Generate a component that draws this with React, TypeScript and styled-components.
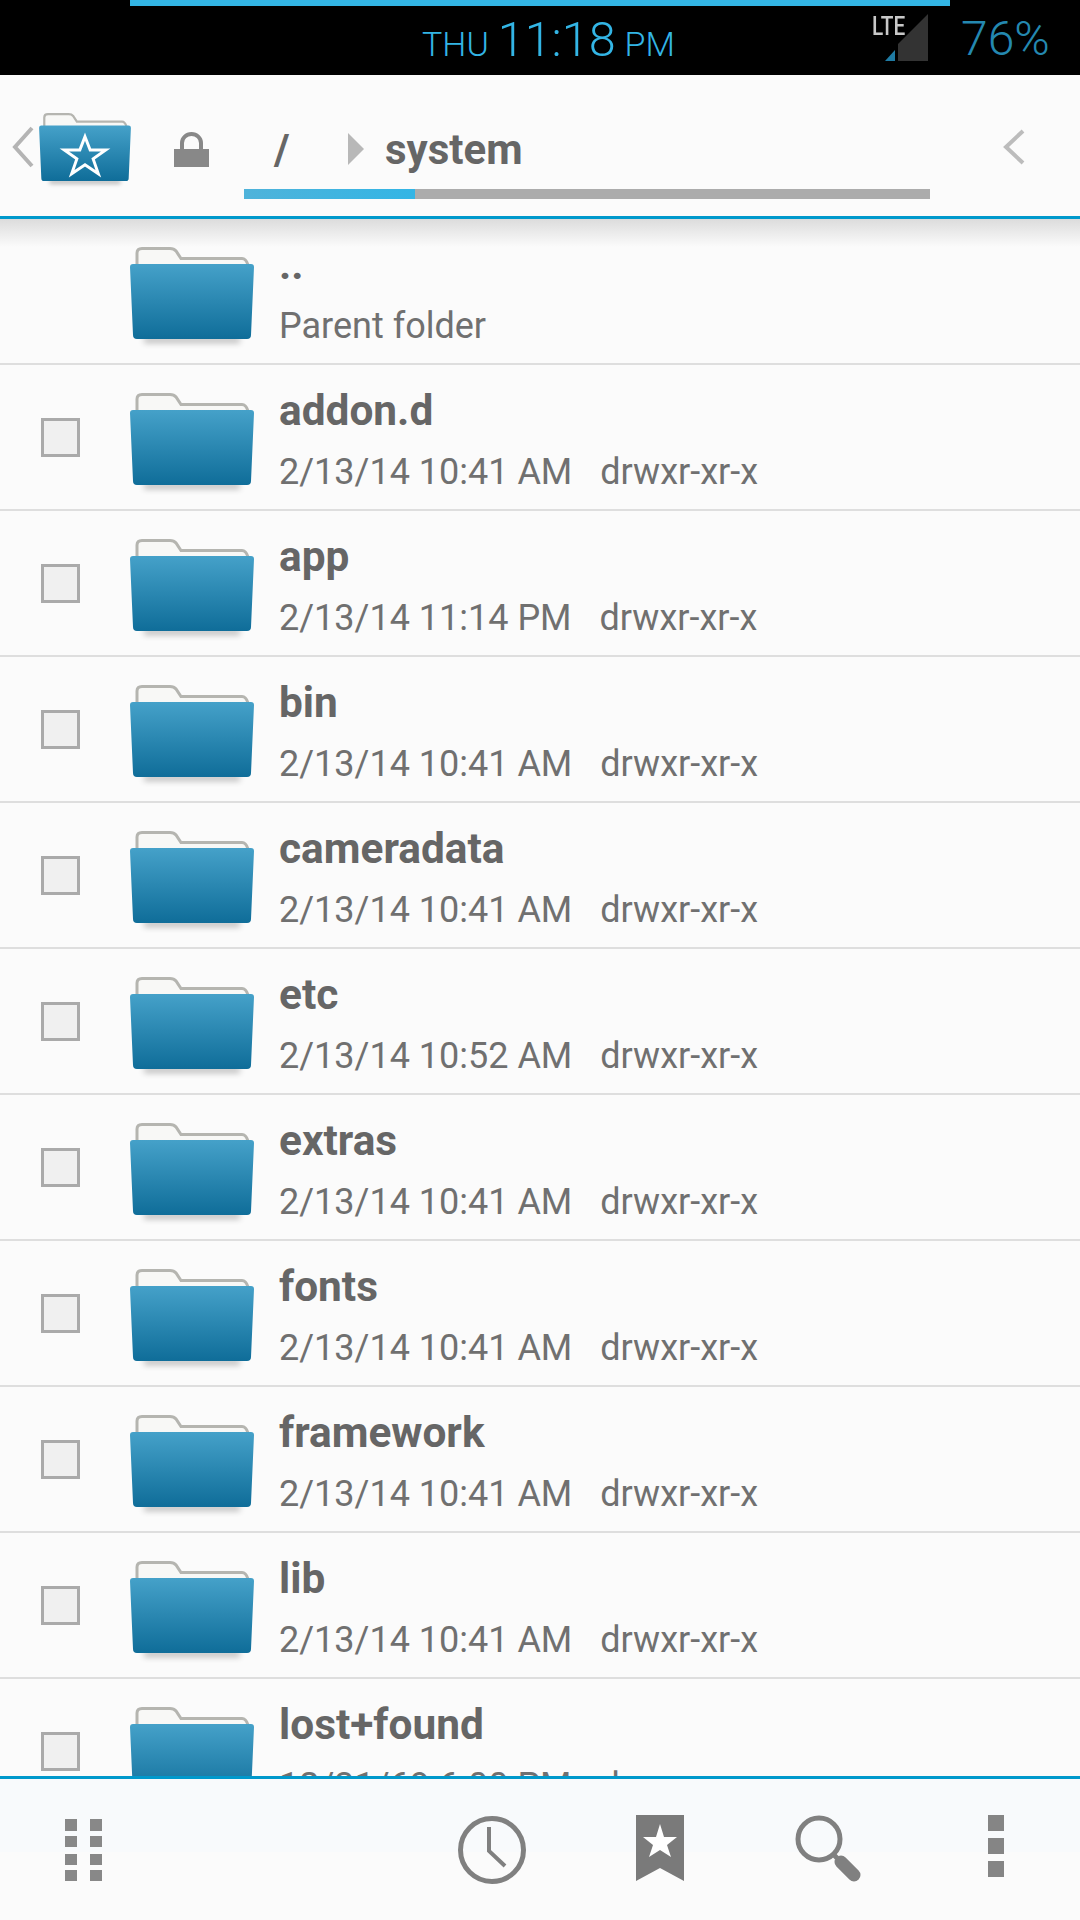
import React from "react";
import styled, { createGlobalStyle } from "styled-components";

const rows = [
  { name: "addon.d", date: "2/13/14 10:41 AM" },
  { name: "app", date: "2/13/14 11:14 PM" },
  { name: "bin", date: "2/13/14 10:41 AM" },
  { name: "cameradata", date: "2/13/14 10:41 AM" },
  { name: "etc", date: "2/13/14 10:52 AM" },
  { name: "extras", date: "2/13/14 10:41 AM" },
  { name: "fonts", date: "2/13/14 10:41 AM" },
  { name: "framework", date: "2/13/14 10:41 AM" },
  { name: "lib", date: "2/13/14 10:41 AM" },
  { name: "lost+found", date: "12/31/69 6:00 PM" },
];

// folder artwork, shared by the list rows and the favourites button
const FolderIcon: React.FC<{ id: string; star?: boolean; width: number; height: number }> = ({ id, star, width, height }) => (
  <svg width={width} height={height} viewBox="0 0 124 104">
    <defs>
      <linearGradient id={id} x1="0" y1="0" x2="0" y2="1">
        <stop offset="0" stopColor="#45a1c9" />
        <stop offset="1" stopColor="#0f6d99" />
      </linearGradient>
      <filter id={`${id}-b`} x="-10%" y="-100%" width="120%" height="300%">
        <feGaussianBlur stdDeviation="3" />
      </filter>
    </defs>
    <rect x="14" y="90" width="96" height="6" fill="#000" opacity="0.25" filter={`url(#${id}-b)`} />
    <path d="M7 20 V6 Q7 1.5 12 1.5 H40 Q44 1.5 46 4 L51 11.5 H112 Q116 11.5 118 18 V20 Z" fill="#f8f8f6" stroke="#b5b5b0" strokeWidth="3" />
    <path d="M0 20 Q0 17 3 17 H121 Q124 17 124 20 L121 88 Q121 92 117 92 H7 Q3 92 3 88 Z" fill={`url(#${id})`} />
    {star && (
      <path d="M62 32 L69 50 L90 50 L73 62 L80 82 L62 70 L44 82 L51 62 L34 50 L55 50 Z" fill="none" stroke="#fff" strokeWidth="4" />
    )}
  </svg>
);

const App: React.FC = () => {
  return (
    <Screen>
      <GlobalStyle />
      <StatusBar>
        <LoadBar />
        <Clock>
          <ClockSmall>THU</ClockSmall>
          <ClockBig>11:18</ClockBig>
          <ClockSmall>PM</ClockSmall>
        </Clock>
        <Signal>
          <LteLabel>LTE</LteLabel>
          <svg width="43" height="47" viewBox="0 0 43 47">
            <path d="M43 0 V47 H13 V30 Z" fill="#333" />
            <path d="M0 47 L10 36 V47 Z" fill="#1f7ba3" />
          </svg>
        </Signal>
        <Battery>76%</Battery>
      </StatusBar>

      <Header>
        <FavButton>
          <svg width="22" height="42" viewBox="0 0 22 42">
            <path d="M20 2 L3 21 L20 40" fill="none" stroke="#b4b4b4" strokeWidth="4" />
          </svg>
          <FavFolder>
            <FolderIcon id="fav" star width={92} height={77} />
          </FavFolder>
        </FavButton>
        <LockIcon width="35" height="35" viewBox="0 0 35 35">
          <path d="M8 18 V11 A9.5 9 0 0 1 27 11 V18" fill="none" stroke="#888" strokeWidth="4" />
          <rect x="0" y="17" width="35" height="18" fill="#888" />
        </LockIcon>
        <Breadcrumb>
          <Crumbs>
            <RootCrumb>/</RootCrumb>
            <svg width="16" height="32" viewBox="0 0 16 32">
              <path d="M0 0 L16 16 L0 32 Z" fill="#b8b8b8" />
            </svg>
            <CrumbName>system</CrumbName>
          </Crumbs>
          <Track>
            <TrackFill />
          </Track>
        </Breadcrumb>
        <NextChevron width="24" height="36" viewBox="0 0 24 36">
          <path d="M21 2 L4 18 L21 34" fill="none" stroke="#bcbcbc" strokeWidth="4" />
        </NextChevron>
      </Header>

      <ListArea>
        <HeaderShadow />
        <Row>
          <CheckSlot />
          <FolderSlot>
            <FolderIcon id="parent" width={124} height={104} />
          </FolderSlot>
          <RowText>
            <RowName>..</RowName>
            <RowMeta>
              <span>Parent folder</span>
            </RowMeta>
          </RowText>
        </Row>
        {rows.map((row) => (
          <Row key={row.name}>
            <CheckSlot>
              <CheckBox />
            </CheckSlot>
            <FolderSlot>
              <FolderIcon id={`f-${row.name}`} width={124} height={104} />
            </FolderSlot>
            <RowText>
              <RowName>{row.name}</RowName>
              <RowMeta>
                <span>{row.date}</span>
                <span>{row.name === "lost+found" ? "drwx------" : "drwxr-xr-x"}</span>
              </RowMeta>
            </RowText>
          </Row>
        ))}
      </ListArea>

      <Footer>
        <FooterCell>
          <svg width="38" height="62" viewBox="0 0 38 62">
            <g fill="#888">
              <rect x="0" y="0" width="12" height="12" />
              <rect x="25" y="0" width="12" height="12" />
              <rect x="0" y="17" width="12" height="11" />
              <rect x="25" y="17" width="12" height="11" />
              <rect x="0" y="35" width="12" height="11" />
              <rect x="25" y="35" width="12" height="11" />
              <rect x="0" y="51" width="12" height="11" />
              <rect x="25" y="51" width="12" height="11" />
            </g>
          </svg>
        </FooterCell>
        <FooterActions>
          <FooterCell>
            <svg width="70" height="70" viewBox="0 0 70 70">
              <circle cx="35" cy="35" r="31.5" fill="none" stroke="#808080" strokeWidth="5" />
              <path d="M32 12 V36 L48 51" fill="none" stroke="#808080" strokeWidth="4" />
            </svg>
          </FooterCell>
          <FooterCell>
            <svg width="48" height="66" viewBox="0 0 48 66">
              <path d="M0 0 H48 V66 L24 53 L0 66 Z" fill="#7a7a7a" />
              <path d="M24 9 L28 22 L41 22 L31 30 L35 42 L24 35 L13 42 L17 30 L7 22 L20 22 Z" fill="#fff" />
            </svg>
          </FooterCell>
          <FooterCell>
            <svg width="66" height="68" viewBox="0 0 66 68">
              <circle cx="24" cy="24" r="21" fill="none" stroke="#808080" strokeWidth="5" />
              <path d="M38 39 L42 43" stroke="#808080" strokeWidth="5" />
              <path d="M46 47 L59 60" stroke="#808080" strokeWidth="13" strokeLinecap="round" />
            </svg>
          </FooterCell>
          <FooterCell>
            <svg width="16" height="62" viewBox="0 0 16 62">
              <g fill="#858585">
                <rect x="0" y="0" width="16" height="16" />
                <rect x="0" y="23" width="16" height="16" />
                <rect x="0" y="46" width="16" height="16" />
              </g>
            </svg>
          </FooterCell>
        </FooterActions>
      </Footer>
    </Screen>
  );
};

export default App;

const GlobalStyle = createGlobalStyle`
  html, body {
    margin: 0;
    padding: 0;
    background: #fbfbfb;
    font-family: Roboto, "Liberation Sans", sans-serif;
  }
`;

const Screen = styled.div`
  width: 1080px;
  height: 1920px;
  display: flex;
  flex-direction: column;
  overflow: hidden;
  background: #fbfbfb;
`;

const StatusBar = styled.div`
  position: relative;
  flex: 0 0 75px;
  display: flex;
  align-items: center;
  background: #000;
`;

const LoadBar = styled.div`
  position: absolute;
  top: 0;
  left: 130px;
  width: 820px;
  height: 6px;
  background: #33b5e5;
`;

const Clock = styled.div`
  display: flex;
  flex: 0 0 253px;
  align-items: baseline;
  gap: 9px;
  margin: 4px 0 0 422px;
  color: #33b5e5;
  font-weight: 300;
  white-space: nowrap;
`;

const ClockSmall = styled.span`
  font-size: 34px;
`;

const ClockBig = styled.span`
  font-size: 48.5px;
`;

const Signal = styled.div`
  position: relative;
  display: flex;
  margin: 0 0 0 210px;
`;

const LteLabel = styled.span`
  position: absolute;
  top: -3px;
  left: -13px;
  color: #c8c8c8;
  font-size: 26px;
  font-weight: 500;
  transform: scaleX(0.8);
  transform-origin: left center;
`;

const Battery = styled.span`
  margin: 2px 0 0 33px;
  color: #2488b0;
  font-size: 48px;
  font-weight: 300;
`;

const Header = styled.div`
  position: relative;
  flex: 0 0 141px;
  display: flex;
  align-items: flex-start;
  box-sizing: content-box;
  border-bottom: 3px solid #0099cc;
`;

const FavButton = styled.div`
  position: relative;
  display: flex;
  margin: 51px 0 0 12px;
`;

const FavFolder = styled.div`
  position: absolute;
  top: -13px;
  left: 27px;
`;

const LockIcon = styled.svg`
  margin: 57px 0 0 140px;
`;

const Breadcrumb = styled.div`
  width: 686px;
  margin: 0 0 0 35px;
`;

const Crumbs = styled.div`
  height: 114px;
  display: flex;
  align-items: center;
  padding-top: 34px;
  box-sizing: border-box;
  color: #666;
  font-weight: 700;
  font-size: 42px;
`;

const RootCrumb = styled.span`
  width: 104px;
  padding-left: 30px;
  box-sizing: border-box;
`;

const CrumbName = styled.span`
  margin-left: 21px;
`;

const Track = styled.div`
  height: 10px;
  background: #acacac;
`;

const TrackFill = styled.div`
  width: 171px;
  height: 100%;
  background: linear-gradient(90deg, #4fb3da, #33b5e5);
`;

const NextChevron = styled.svg`
  margin: 54px 0 0 72px;
`;

const ListArea = styled.div`
  position: relative;
  flex: 1;
  min-height: 0;
  overflow: hidden;
`;

const HeaderShadow = styled.div`
  position: absolute;
  top: 0;
  left: 0;
  right: 0;
  height: 28px;
  background: linear-gradient(#dcdcdc, rgba(251, 251, 251, 0));
`;

const Row = styled.div`
  height: 146px;
  display: flex;
  box-sizing: border-box;
  border-bottom: 2px solid #dedede;

  &:first-of-type {
    height: 145px;
  }
`;

const CheckSlot = styled.div`
  flex: 0 0 130px;
  display: flex;
  align-items: center;
  padding-left: 41px;
  box-sizing: border-box;
`;

const CheckBox = styled.div`
  width: 39px;
  height: 39px;
  box-sizing: border-box;
  border: 3px solid #aaa;
  background: #f0f0f0;
`;

const FolderSlot = styled.div`
  flex: 0 0 149px;
  padding-top: 28px;
`;

const RowText = styled.div`
  display: flex;
  flex-direction: column;
  padding-top: 16px;
`;

const RowName = styled.div`
  height: 60px;
  line-height: 60px;
  color: #666;
  font-size: 42.4px;
  font-weight: 700;
`;

const RowMeta = styled.div`
  display: flex;
  gap: 28px;
  height: 60px;
  margin-top: 1px;
  line-height: 60px;
  color: #707070;
  font-size: 36px;
  white-space: nowrap;
`;

const Footer = styled.div`
  position: relative;
  flex: 0 0 141px;
  display: flex;
  align-items: center;
  justify-content: space-between;
  border-top: 3px solid #0099cc;
  background: linear-gradient(#f8fafc 0, #f8fafc 52%, #fbfbfb 52%);
`;

const FooterActions = styled.div`
  display: flex;
`;

const FooterCell = styled.div`
  width: 168px;
  display: flex;
  justify-content: center;
`;
